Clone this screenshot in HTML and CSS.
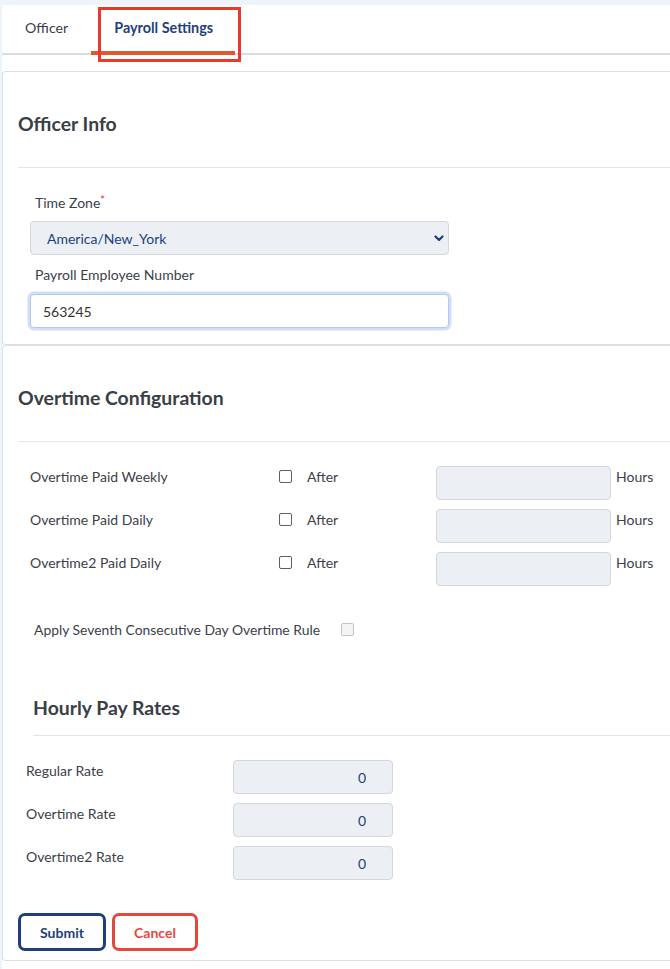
FILE: index.html
```html
<!DOCTYPE html>
<html lang="en">
<head>
<meta charset="utf-8">
<title>Payroll Settings</title>
<link rel="stylesheet" href="styles.css">
</head>
<body>
<div class="shell">
  <nav class="tabs">
    <a class="tab">Officer</a>
    <a class="tab active">Payroll Settings</a>
  </nav>
  <div class="annot"></div>
  <div class="content">
    <section class="card">
      <div class="card-head"><h2>Officer Info</h2></div>
      <div class="card-body info-body">
        <label class="flabel">Time Zone<span class="req">*</span></label>
        <div class="select-wrap">
          <select class="select">
            <option>America/New_York</option>
          </select>
          <svg class="chev" width="10" height="7" viewBox="0 0 10 7"><polyline points="1.5,1.5 5,5 8.5,1.5" fill="none" stroke="#1e3f7c" stroke-width="2.2" stroke-linecap="round" stroke-linejoin="round"/></svg>
        </div>
        <label class="flabel second">Payroll Employee Number</label>
        <input class="text-input" type="text" value="563245">
      </div>
    </section>
    <section class="card">
      <div class="card-head"><h2>Overtime Configuration</h2></div>
      <div class="card-body ot-body">
        <div class="ot-row">
          <span class="ot-label">Overtime Paid Weekly</span>
          <span class="ot-check"><input type="checkbox" class="cb"><span>After</span></span>
          <input class="box-input" type="text">
          <span class="ot-unit">Hours</span>
        </div>
        <div class="ot-row">
          <span class="ot-label">Overtime Paid Daily</span>
          <span class="ot-check"><input type="checkbox" class="cb"><span>After</span></span>
          <input class="box-input" type="text">
          <span class="ot-unit">Hours</span>
        </div>
        <div class="ot-row">
          <span class="ot-label">Overtime2 Paid Daily</span>
          <span class="ot-check"><input type="checkbox" class="cb"><span>After</span></span>
          <input class="box-input" type="text">
          <span class="ot-unit">Hours</span>
        </div>
        <div class="seventh">
          <span>Apply Seventh Consecutive Day Overtime Rule</span>
          <input type="checkbox" class="cb cb-disabled" disabled>
        </div>
        <div class="rates-head"><h2>Hourly Pay Rates</h2></div>
        <div class="rate-row">
          <span class="rate-label">Regular Rate</span>
          <input class="box-input rate-input" type="text" value="0">
        </div>
        <div class="rate-row">
          <span class="rate-label">Overtime Rate</span>
          <input class="box-input rate-input" type="text" value="0">
        </div>
        <div class="rate-row">
          <span class="rate-label">Overtime2 Rate</span>
          <input class="box-input rate-input" type="text" value="0">
        </div>
        <div class="actions">
          <button class="btn btn-submit">Submit</button>
          <button class="btn btn-cancel">Cancel</button>
        </div>
      </div>
    </section>
  </div>
</div>
</body>
</html>
```

FILE: styles.css
```css
* { box-sizing: border-box; }
html, body {
  margin: 0;
  padding: 0;
  background: #eef4fc;
  overflow: hidden;
}
body {
  font-family: Lato, "Open Sans", "Liberation Sans", sans-serif;
  font-size: 14px;
  color: #3c4149;
  height: 969px;
}
.shell {
  position: relative;
  margin: 5px 0 0 2px;
  background: #fff;
  height: 964px;
}
.tabs {
  display: flex;
  height: 50px;
  border-bottom: 2px solid #d9dde2;
}
.tab {
  position: relative;
  padding: 0 23px;
  line-height: 46px;
  color: #3a3e45;
  font-size: 14.2px;
  cursor: pointer;
}
.tab.active {
  color: #1e3f7c;
  font-weight: 700;
  font-size: 14.4px;
  padding: 0 22px 0 23px;
}
.tab.active::after {
  content: "";
  position: absolute;
  left: 0;
  right: 0;
  bottom: -2px;
  height: 4px;
  background: #dd5a2f;
}
.annot {
  position: absolute;
  left: 96px;
  top: 2px;
  width: 143px;
  height: 55px;
  border: 3px solid #e8392a;
}
.content {
  padding-top: 16px;
}
.card {
  border: 1px solid #dcdfe3;
  border-right: 0;
  border-radius: 4px 0 0 4px;
  background: #fff;
}
.card-head {
  margin-left: 15px;
  padding: 40px 0 31px 0;
  border-bottom: 1px solid #e3e5e8;
}
h2 {
  margin: 0;
  font-size: 19.4px;
  line-height: 24px;
  font-weight: 700;
  color: #3a3e45;
}
.info-body {
  padding: 25px 0 16px 27px;
  width: 450px;
}
.flabel {
  display: block;
  padding-left: 5px;
  line-height: 20px;
  margin-bottom: 8px;
}
.flabel.second {
  margin-top: 10px;
  margin-bottom: 9px;
}
.req {
  color: #d9342b;
  font-size: 11px;
  vertical-align: top;
  line-height: 14px;
}
.select-wrap {
  position: relative;
  width: 419px;
}
.select {
  display: block;
  width: 419px;
  height: 34px;
  appearance: none;
  -webkit-appearance: none;
  background: #ecf0f4;
  border: 1px solid #d3d7dc;
  border-radius: 4px;
  padding: 0 0 0 16px;
  font-family: inherit;
  font-size: 14px;
  color: #1e3f7c;
}
.chev {
  position: absolute;
  right: 5px;
  top: 14px;
}
.text-input {
  display: block;
  width: 419px;
  height: 34px;
  border: 1px solid #b4c9f2;
  box-shadow: 0 0 0 2.5px #d2def8;
  border-radius: 4px;
  padding: 0 0 0 12px;
  font-family: inherit;
  font-size: 14px;
  color: #333;
  background: #fff;
  outline: none;
}
.ot-body {
  padding: 24px 0 9px 15px;
}
.ot-row {
  display: grid;
  grid-template-columns: 249px 157px 175px auto;
  align-items: start;
  padding-left: 12px;
  margin-bottom: 9px;
}
.ot-label, .ot-check, .ot-unit {
  line-height: 20px;
  padding-top: 1px;
}
.ot-check {
  display: flex;
  align-items: center;
  gap: 15px;
}
.ot-unit {
  padding-left: 5px;
}
.cb {
  appearance: none;
  -webkit-appearance: none;
  width: 13px;
  height: 13px;
  margin: 0;
  border: 1px solid #5c5f64;
  border-radius: 2px;
  background: #fff;
  position: relative;
  top: -1px;
}
.cb-disabled {
  border-color: #c3c5c8;
  background: #f4f4f5;
}
.box-input {
  display: block;
  height: 34px;
  width: 175px;
  background: #ecf0f4;
  border: 1px solid #d3d6da;
  border-radius: 4px;
  font-family: inherit;
  font-size: 14px;
  color: #1e3f7c;
  outline: none;
}
.seventh {
  display: flex;
  align-items: center;
  gap: 21px;
  padding-left: 16px;
  margin-top: 34px;
  line-height: 20px;
  font-size: 13.9px;
}
.rates-head {
  margin-top: 56px;
  padding: 0 0 15px 0;
  margin-left: 15px;
  border-bottom: 1px solid #e3e5e8;
}
.rate-row {
  display: grid;
  grid-template-columns: 207px 160px;
  align-items: start;
  padding-left: 8px;
  margin-bottom: 9px;
}
.rates-head + .rate-row {
  margin-top: 24px;
}
.rate-label {
  line-height: 20px;
  padding-top: 1px;
}
.rate-input {
  width: 160px;
  text-align: right;
  padding-right: 26px;
  padding-top: 2px;
}
.actions {
  display: flex;
  gap: 6px;
  margin-top: 33px;
}
.btn {
  height: 38px;
  border-radius: 7px;
  background: #fff;
  font-family: inherit;
  font-size: 14px;
  font-weight: 700;
  padding: 0;
  cursor: pointer;
}
.btn-submit {
  width: 88px;
  border: 3px solid #1e3f7c;
  color: #1e3f7c;
}
.btn-cancel {
  width: 86px;
  border: 3px solid #e5473f;
  color: #e5473f;
}
```
